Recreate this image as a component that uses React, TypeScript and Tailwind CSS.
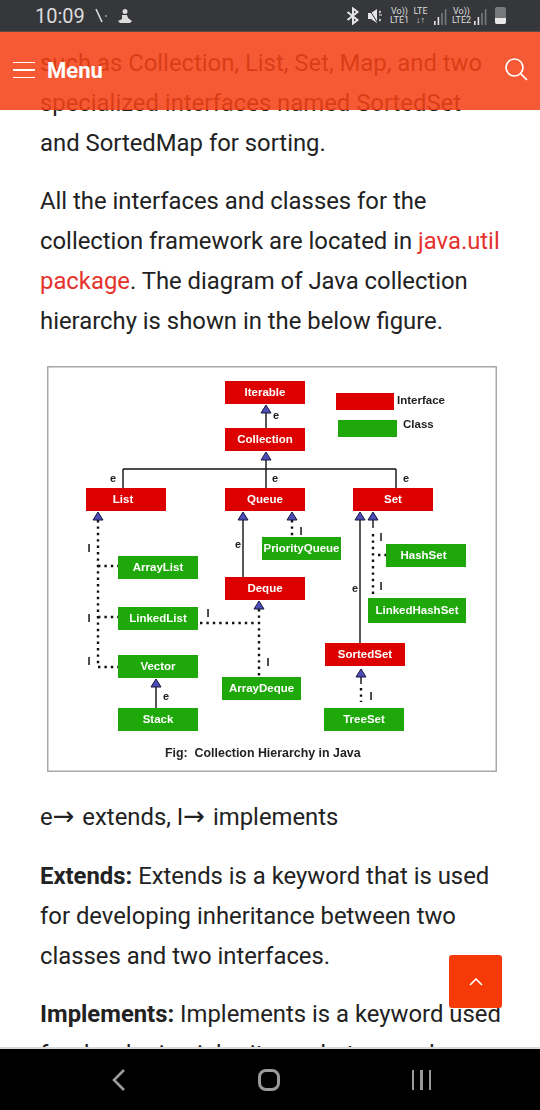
import React from "react";

type Box = { label: string; x: number; y: number; w: number; h: number; kind: "red" | "green"; cls?: string };
type Mark = { text: string; x: number; y: number };

const boxes: Box[] = [
  { label: "Iterable", x: 178, y: 15, w: 80, h: 23, kind: "red" },
  { label: "Collection", x: 178, y: 62, w: 80, h: 23, kind: "red" },
  { label: "List", x: 39, y: 122, w: 80, h: 23, kind: "red", cls: "pr-[6px]" },
  { label: "Queue", x: 178, y: 122, w: 80, h: 23, kind: "red" },
  { label: "Set", x: 306, y: 122, w: 80, h: 23, kind: "red" },
  { label: "PriorityQueue", x: 215, y: 171, w: 79, h: 23, kind: "green" },
  { label: "HashSet", x: 339, y: 178, w: 80, h: 23, kind: "green", cls: "pr-[5px]" },
  { label: "ArrayList", x: 71, y: 190, w: 80, h: 23, kind: "green" },
  { label: "Deque", x: 178, y: 211, w: 80, h: 23, kind: "red" },
  { label: "LinkedList", x: 71, y: 241, w: 80, h: 23, kind: "green" },
  { label: "LinkedHashSet", x: 321, y: 232, w: 98, h: 25, kind: "green" },
  { label: "SortedSet", x: 278, y: 277, w: 80, h: 23, kind: "red" },
  { label: "Vector", x: 71, y: 289, w: 80, h: 23, kind: "green" },
  { label: "ArrayDeque", x: 175, y: 311, w: 79, h: 23, kind: "green" },
  { label: "Stack", x: 71, y: 342, w: 80, h: 23, kind: "green" },
  { label: "TreeSet", x: 277, y: 342, w: 80, h: 23, kind: "green" },
];

const marks: Mark[] = [
  { text: "e", x: 229, y: 49 },
  { text: "e", x: 66, y: 112 },
  { text: "e", x: 228, y: 112 },
  { text: "e", x: 359, y: 112 },
  { text: "e", x: 191, y: 178 },
  { text: "e", x: 308, y: 222 },
  { text: "e", x: 119, y: 330 },
  { text: "I", x: 42, y: 182 },
  { text: "I", x: 42, y: 252 },
  { text: "I", x: 42, y: 295 },
  { text: "I", x: 254, y: 165 },
  { text: "I", x: 334, y: 171 },
  { text: "I", x: 334, y: 220 },
  { text: "I", x: 161, y: 247 },
  { text: "I", x: 221, y: 296 },
  { text: "I", x: 324, y: 330 },
];

// arrow heads, apex position
const heads = [
  [219, 39], [219, 86], [51, 146], [196, 146], [245, 146], [313, 146], [326, 146], [212, 235], [109, 313], [314, 303],
];

const solid = [
  "M219 47V62", "M219 93V122", "M76 103H349", "M76 103V122", "M349 103V122", "M196 154V211",
  "M313 154V277", "M326 154V162", "M109 321V342", "M314 311V318",
];

const dotted = [
  "M51 154V301", "M51 200H71", "M51 251H71", "M51 301H71", "M245 154V171", "M326 168V232", "M331 189H339",
  "M153 257H208", "M212 243V311", "M314 322V336",
];

function Diagram() {
  return (
    <div className="relative mx-[7px] mt-[25px] mb-[25px] h-[406px] w-[450px] bg-white shadow-[inset_0_0_0_1.5px_#a8a8a8] blur-[0.3px] font-['Liberation_Sans',sans-serif]">
      <svg className="absolute left-0 top-0" width="450" height="406" fill="none">
        {solid.map((d) => (
          <path key={d} d={d} stroke="#111" strokeWidth="1.4" />
        ))}
        {dotted.map((d) => (
          <path key={d} d={d} stroke="#111" strokeWidth="2.4" strokeDasharray="2.4 4" />
        ))}
        {heads.map(([x, y]) => (
          <path key={`${x}-${y}`} d={`M${x} ${y}L${x + 5} ${y + 8}H${x - 5}Z`} fill="#4d4db8" stroke="#16163a" strokeWidth="1" />
        ))}
      </svg>

      {boxes.map((b) => (
        <div
          key={b.label}
          className={`absolute flex items-center justify-center text-[11.5px] font-bold leading-none text-white ${
            b.kind === "red" ? "bg-[#dc0000]" : "bg-[#1fa80a]"
          } ${b.cls ?? ""}`}
          style={{ left: b.x, top: b.y, width: b.w, height: b.h }}
        >
          {b.label}
        </div>
      ))}

      {marks.map((m, i) => (
        <span
          key={i}
          className="absolute -translate-x-1/2 text-[11px] font-bold leading-none text-[#222]"
          style={{ left: m.x, top: m.y - 5 }}
        >
          {m.text}
        </span>
      ))}

      {/* legend */}
      <div className="absolute left-[289px] top-[27px] h-[17px] w-[58px] bg-[#dc0000]" />
      <div className="absolute left-[291px] top-[54px] h-[17px] w-[59px] bg-[#1fa80a]" />
      <span className="absolute left-[350px] top-[29px] text-[11.5px] font-bold leading-none text-[#222]">Interface</span>
      <span className="absolute left-[356px] top-[53px] text-[11.5px] font-bold leading-none text-[#222]">Class</span>

      <p className="absolute left-[118px] top-[381px] whitespace-pre text-[12.4px] font-bold leading-none text-[#222]">
        {"Fig:  Collection Hierarchy in Java"}
      </p>
    </div>
  );
}

function Signal({ strong }: { strong: number }) {
  return (
    <svg width="14" height="18" viewBox="0 0 14 18">
      {[0, 1, 2, 3].map((i) => (
        <rect key={i} x={i * 3.6} y={14 - i * 4} width="1.6" height={4 + i * 4} fill={i < strong ? "#e4e4e4" : "#77787b"} />
      ))}
    </svg>
  );
}

function StatusBar() {
  return (
    <div className="flex h-[32px] shrink-0 items-center justify-between border-b border-[#5a4a44] bg-[#36373b] pl-[35px] pr-[34px] text-[#dcdcdc]">
      <div className="flex items-center">
        <span className="text-[20px] leading-none">10:09</span>
        <svg className="ml-[10px]" width="14" height="18" viewBox="0 0 14 18" fill="none" stroke="#dcdcdc">
          <path d="M1 2L7 15" strokeWidth="1.6" />
          <path d="M10 9h2" strokeWidth="1" />
        </svg>
        <svg className="ml-[8px]" width="16" height="18" viewBox="0 0 16 18" fill="#dcdcdc">
          <circle cx="8" cy="4.5" r="2.5" />
          <path d="M5 8h5l1 3 4 3-2 2H3l-2-2 4-2z" />
        </svg>
      </div>
      <div className="flex items-center">
        <svg width="14" height="18" viewBox="0 0 14 18" fill="none" stroke="#e4e4e4" strokeWidth="2">
          <path d="M1.5 5l10 8-4.5 3.5V1.5L11.5 5l-10 8" />
        </svg>
        <svg className="ml-[8px]" width="16" height="16" viewBox="0 0 16 16" fill="#e4e4e4">
          <path d="M0 5h3l6-4v14l-6-4H0z" />
          <path d="M1 1l8 13" stroke="#36373b" strokeWidth="1" />
          <path d="M11 3l2 1-2 1M11 7h3M11 11l2 1-2 1" stroke="#e4e4e4" fill="none" />
        </svg>
        <div className="ml-[6px] flex w-[19px] flex-col items-center text-[9px] leading-[9px] font-['Roboto',sans-serif]">
          <span>Vo))</span>
          <span>LTE1</span>
        </div>
        <div className="ml-[4px] flex w-[15px] flex-col items-center text-[9px] leading-[9px] font-['Roboto',sans-serif]">
          <span>LTE</span>
          <span className="font-bold">↓↑</span>
        </div>
        <div className="ml-[6px]">
          <Signal strong={2} />
        </div>
        <div className="ml-[3px] flex w-[21px] flex-col items-center text-[9px] leading-[9px] font-['Roboto',sans-serif]">
          <span>Vo))</span>
          <span>LTE2</span>
        </div>
        <div className="ml-[2px]">
          <Signal strong={2} />
        </div>
        <div className="ml-[7px] flex h-[17px] w-[11px] flex-col justify-end rounded-[2px] bg-[#77787b]">
          <div className="h-[6px] rounded-b-[2px] bg-[#e8e8e8]" />
        </div>
      </div>
    </div>
  );
}

export default function App() {
  return (
    <div className="relative flex h-[1110px] w-[540px] flex-col overflow-hidden bg-white font-['Roboto',sans-serif]">
      <StatusBar />

      <main className="relative min-h-0 flex-1 overflow-hidden">
        <article className="pl-[40px] pt-[11px] text-[23.85px] leading-[40px] text-[#222]">
          <p className="mb-[18px] whitespace-nowrap">
            such as Collection, List, Set, Map, and two
            <br />
            specialized interfaces named SortedSet
            <br />
            and SortedMap for sorting.
          </p>
          <p className="whitespace-nowrap">
            All the interfaces and classes for the
            <br />
            collection framework are located in <span className="text-[#e5322d]">java.util</span>
            <br />
            <span className="text-[#e5322d]">package</span>. The diagram of Java collection
            <br />
            hierarchy is shown in the below figure.
          </p>

          <Diagram />

          <p className="mb-[19px]">
            e<span className="mr-[2px] font-['DejaVu_Sans',sans-serif] text-[26px] leading-none">→</span> extends, I
            <span className="mr-[2px] font-['DejaVu_Sans',sans-serif] text-[26px] leading-none">→</span> implements
          </p>
          <p className="mb-[18px] whitespace-nowrap">
            <strong>Extends:</strong> Extends is a keyword that is used
            <br />
            for developing inheritance between two
            <br />
            classes and two interfaces.
          </p>
          <p className="whitespace-nowrap">
            <strong>Implements:</strong> Implements is a keyword used
            <br />
            for developing inheritance between class
          </p>
        </article>

        <header className="absolute left-0 right-0 top-0 flex h-[78px] items-center justify-between bg-[#f54116]/87 pl-[13px] pr-[12px] text-white">
          <div className="flex items-center gap-[12px]">
            <div className="-mt-[2px] flex w-[22px] flex-col gap-[6px]">
              <div className="h-[1.5px] bg-white" />
              <div className="h-[1.5px] bg-white" />
              <div className="h-[1.5px] bg-white" />
            </div>
            <span className="text-[22px] font-bold leading-none">Menu</span>
          </div>
          <svg className="-mt-[4px]" width="24" height="24" viewBox="0 0 24 24" fill="none" stroke="white" strokeWidth="1.7">
            <circle cx="10.5" cy="10.5" r="8.5" />
            <path d="M16.5 16.5L23 23" />
          </svg>
        </header>
      </main>

      {/* back to top */}
      <button className="absolute left-[449px] top-[955px] flex h-[53px] w-[53px] items-center justify-center rounded-[3px] bg-[#f53a07]">
        <svg width="14" height="8" viewBox="0 0 14 8" fill="none" stroke="white" strokeWidth="1.6">
          <path d="M1 7l6-6 6 6" />
        </svg>
      </button>

      <nav className="flex h-[63px] shrink-0 items-center justify-between border-t-[2px] border-[#d8d8d8] bg-black pl-[111px] pr-[109px]">
        <svg width="15" height="24" viewBox="0 0 15 24" fill="none" stroke="#9a9a9a" strokeWidth="2.6">
          <path d="M13 2L3 12l10 10" />
        </svg>
        <div className="h-[22px] w-[22px] rounded-[8px] border-[3px] border-[#9a9a9a]" />
        <div className="flex gap-[6px]">
          <div className="h-[20px] w-[2.5px] bg-[#9a9a9a]" />
          <div className="h-[20px] w-[2.5px] bg-[#9a9a9a]" />
          <div className="h-[20px] w-[2.5px] bg-[#9a9a9a]" />
        </div>
      </nav>
    </div>
  );
}
